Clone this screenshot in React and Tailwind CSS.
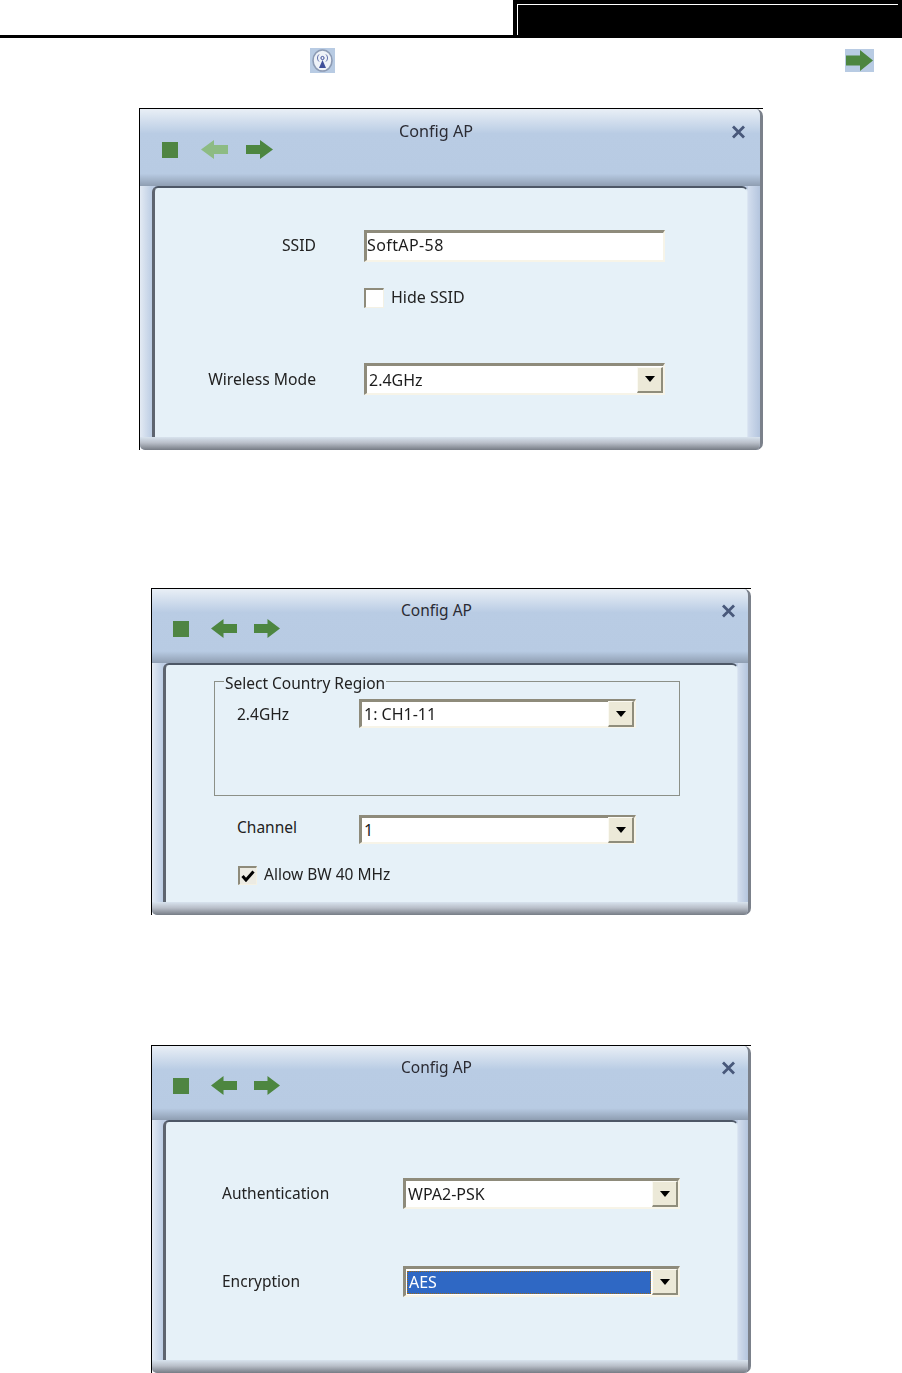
const FONT = "font-['Noto_Sans',sans-serif]";

function Arrow({ dir = "right", color = "#4d8640", className = "w-[27px] h-[19px]" }) {
  const pts = dir === "right" ? "0,5 14,5 14,0 27,9.5 14,19 14,14 0,14" : "27,5 13,5 13,0 0,9.5 13,19 13,14 27,14";
  return (
    <svg viewBox="0 0 27 19" preserveAspectRatio="none" className={className}>
      <polygon points={pts} fill={color} />
    </svg>
  );
}

function Sunken({ className = "", children }) {
  return (
    <div className={`flex items-center border-t-[3px] border-l-[3px] border-r-2 border-b-2 border-t-[#8e8b7b] border-l-[#8e8b7b] border-r-[#f7f4e8] border-b-[#f7f4e8] bg-white text-[16px] leading-none text-[#1c1c1c] ${className}`}>
      {children}
    </div>
  );
}

function DropButton() {
  return (
    <div className="flex h-[26px] w-[26px] shrink-0 items-center justify-center self-center border border-t-[#fbfaf3] border-l-[#fbfaf3] border-r-[#8f8d7c] border-b-[#8f8d7c] border-r-2 border-b-2 bg-[#ece9d8]">
      <svg viewBox="0 0 10 6" className="h-[6px] w-[10px]">
        <polygon points="0,0 10,0 5,6" fill="#000" />
      </svg>
    </div>
  );
}

function Select({ value, className = "", selected = false }) {
  return (
    <Sunken className={className}>
      {selected ? (
        <div className="mx-px flex h-[23px] flex-1 items-center border border-dotted border-[#9a6b1c] bg-[#2f68c4] pl-px text-white">
          {value}
        </div>
      ) : (
        <div className="flex-1 pl-[2px]">{value}</div>
      )}
      <DropButton />
    </Sunken>
  );
}

function Checkbox({ checked = false, className = "" }) {
  return (
    <div className={`flex shrink-0 items-center justify-center border-t-2 border-l-2 border-r border-b border-t-[#8e8b7b] border-l-[#8e8b7b] border-r-[#f4f1e4] border-b-[#f4f1e4] ${checked ? "bg-[#ecebe3]" : "bg-white"} ${className}`}>
      {checked && (
        <svg viewBox="0 0 14 12" className="h-[12px] w-[14px]">
          <polyline points="1.5,6 5,10 12.5,1.5" fill="none" stroke="#000" strokeWidth="3" />
        </svg>
      )}
    </div>
  );
}

function Dialog({ wide = false, titleBar, titleGap, titleTop, titleSize, closeRight, closeTop, stopLeft, backPale = false, panelH, leftGutter, rightGutter, children, className = "" }) {
  const arrow = wide ? "h-[19px] w-[27px]" : "h-[19px] w-[26px]";
  return (
    <div className={`border-t border-l border-t-black border-l-black ${className}`}>
      <div className="flex flex-col overflow-hidden rounded-tr-[7px] rounded-br-[7px] rounded-bl-[5px] border-r-[3px] border-r-[#7b818b] bg-[#c0cfe6] blur-[0.35px]">
        <div className={`flex items-start bg-[linear-gradient(to_bottom,#e9eff6_0%,#b9cce4_32%,#b8cbe3_84%,#8f9eb2_100%)] ${titleBar}`}>
          <div className={`flex items-center ${wide ? "mt-[31px] gap-[18px]" : "mt-[30px] gap-[17px]"} ${stopLeft}`}>
            <div className="mr-[5px] h-4 w-4 bg-[#4f8542]" />
            <Arrow dir="left" color={backPale ? "#8dbb83" : "#4d8640"} className={arrow} />
            <Arrow dir="right" className={arrow} />
          </div>
          <div className={`leading-[22px] text-[#2b2b33] ${titleSize} ${titleTop} ${titleGap}`}>Config AP</div>
          <svg viewBox="0 0 14 14" className={`ml-auto h-[14px] w-[15px] ${closeTop} ${closeRight}`}>
            <path d="M1.5 1.5 12.5 12.5 M12.5 1.5 1.5 12.5" stroke="#48587a" strokeWidth="2.8" fill="none" />
          </svg>
        </div>
        <div className="flex">
          <div className={`shrink-0 bg-[linear-gradient(to_right,#e3eaf3,#bccde4)] ${leftGutter}`} />
          <div className={`flex-1 rounded-t-[6px] border-t-2 border-l-[3px] border-r border-t-[#4d5766] border-l-[#5d646f] border-r-[#dbe6f2] bg-[#e6f1f8] leading-5 text-[#222] ${wide ? "text-[16px]" : "text-[15.5px]"} ${panelH}`}>
            {children}
          </div>
          <div className={`shrink-0 bg-[linear-gradient(to_right,#d3deee,#b4c5de)] ${rightGutter}`} />
        </div>
        <div className="h-[13px] bg-[linear-gradient(to_bottom,#d8e3ee,#b9bfc9_45%,#767c85)]" />
      </div>
    </div>
  );
}

function TowerIcon() {
  return (
    <div className="flex h-[25px] w-[25px] items-center justify-center bg-[#b8cbe3]">
      <svg viewBox="0 0 25 25" className="h-[25px] w-[25px]">
        <ellipse cx="12.5" cy="12.5" rx="9.5" ry="10.5" fill="#eef2f8" stroke="#8d9bb4" strokeWidth="1.6" />
        <path d="M12.5 12 9 20h7z" fill="#3f4f9a" />
        <circle cx="12.5" cy="10" r="1.6" fill="none" stroke="#3f4f9a" strokeWidth="1" />
        <path d="M9 6.5c-2 2-2 5 0 7M16 6.5c2 2 2 5 0 7" fill="none" stroke="#5b6aa8" strokeWidth="1" />
      </svg>
    </div>
  );
}

export default function App() {
  return (
    <div className={`${FONT} w-[902px] bg-white`}>
      <header className="flex h-[38px] border-b-[3px] border-b-black">
        <div className="flex-1" />
        <div className="h-[35px] w-[389px] bg-black pl-1 pt-1">
          <div className="h-full w-[381px] border-t border-l border-t-white border-l-white" />
        </div>
      </header>

      <div className="mt-[10px] flex h-[25px] items-center pl-[310px]">
        <TowerIcon />
        <div className="ml-[510px] flex h-[23px] w-[29px] items-center justify-center bg-[#b8cbe3]">
          <Arrow className="h-[21px] w-[27px]" />
        </div>
      </div>

      <Dialog
        wide
        backPale
        className="ml-[139px] mt-[35px] w-[624px]"
        titleBar="h-[77px]"
        stopLeft="ml-[22px]"
        titleGap="ml-[126px]"
        titleTop="mt-[11px]"
        titleSize="text-[16.2px]"
        closeRight="mr-[14px]"
        closeTop="mt-4"
        panelH="h-[251px]"
        leftGutter="w-3"
        rightGutter="w-3"
      >
        <div className="flex items-center pt-[42px]">
          <div className="mb-[2px] w-[161px] text-right text-[15.7px]">SSID</div>
          <Sunken className="ml-12 h-8 w-[301px]">
            <span className="pb-[3px] tracking-[0.4px]">SoftAP-58</span>
          </Sunken>
        </div>
        <div className="ml-[209px] mt-[25px] flex items-center">
          <Checkbox className="h-[20px] w-[20px]" />
          <span className="mb-[2px] ml-[7px]">Hide SSID</span>
        </div>
        <div className="mt-[54px] flex items-center">
          <div className="mb-[1px] w-[161px] text-right text-[15.7px]">Wireless Mode</div>
          <Select value="2.4GHz" className="ml-12 h-8 w-[301px]" />
        </div>
      </Dialog>

      <Dialog
        className="ml-[151px] mt-[138px] w-[600px]"
        titleBar="h-[74px]"
        stopLeft="ml-[21px]"
        titleGap="ml-[121px]"
        titleTop="mt-[10px]"
        titleSize="text-[15.5px]"
        closeRight="mr-[12px]"
        closeTop="mt-[15px]"
        panelH="h-[239px]"
        leftGutter="w-[11px]"
        rightGutter="w-[10px]"
      >
        <div className="relative ml-12 mt-4 h-[115px] w-[466px] border border-[#8c9088] pl-[22px] pt-[17px]">
          <span className="absolute -top-[9px] left-[9px] bg-[#e6f1f8] px-px">Select Country Region</span>
          <div className="flex items-center">
            <div className="w-[122px]">2.4GHz</div>
            <Select value="1: CH1-11" className="h-[29px] w-[277px]" />
          </div>
        </div>
        <div className="ml-[71px] mt-[19px] flex items-center">
          <div className="mb-[5px] w-[122px]">Channel</div>
          <Select value="1" className="h-[29px] w-[277px]" />
        </div>
        <div className="ml-[72px] mt-5 flex items-center">
          <Checkbox checked className="h-[19px] w-[19px]" />
          <span className="mb-[2px] ml-[7px]">Allow BW 40 MHz</span>
        </div>
      </Dialog>

      <Dialog
        className="ml-[151px] mt-[130px] w-[600px]"
        titleBar="h-[74px]"
        stopLeft="ml-[21px]"
        titleGap="ml-[121px]"
        titleTop="mt-[10px]"
        titleSize="text-[15.5px]"
        closeRight="mr-[12px]"
        closeTop="mt-[15px]"
        panelH="h-[240px]"
        leftGutter="w-[11px]"
        rightGutter="w-[10px]"
      >
        <div className="ml-14 flex items-center pt-14">
          <div className="mb-[2px] w-[181px]">Authentication</div>
          <Select value="WPA2-PSK" className="h-[31px] w-[277px]" />
        </div>
        <div className="ml-14 mt-[57px] flex items-center">
          <div className="mb-[2px] w-[181px]">Encryption</div>
          <Select selected value="AES" className="h-[31px] w-[277px]" />
        </div>
      </Dialog>
    </div>
  );
}
